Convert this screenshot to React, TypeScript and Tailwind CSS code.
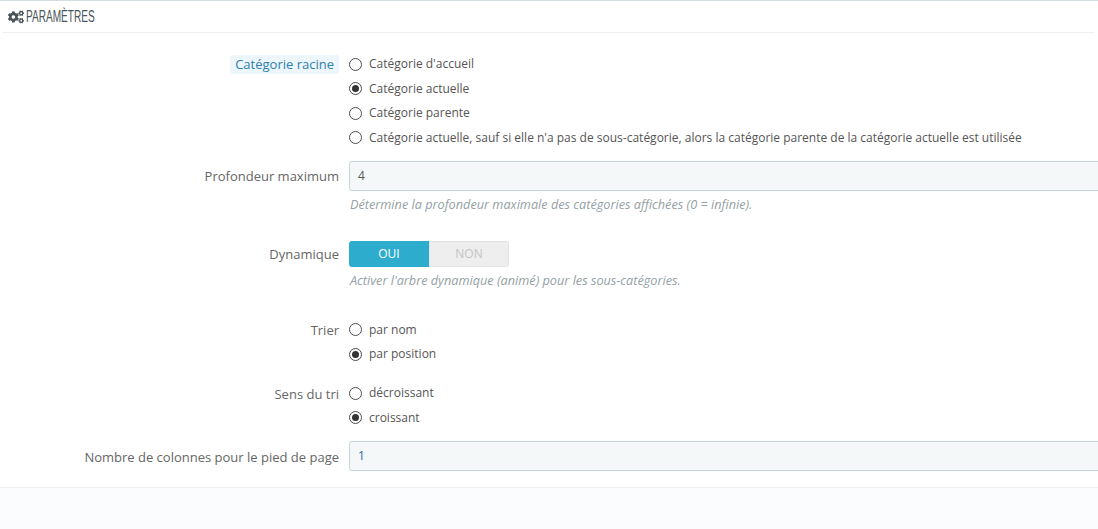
import { FaCogs } from "react-icons/fa";

const font = "font-['Open_Sans',sans-serif]";

const Radio = ({ label, checked }: { label: string; checked?: boolean }) => (
  <div className="flex h-[24.5px] items-center">
    <span className="flex h-[13px] w-[13px] shrink-0 items-center justify-center rounded-full border border-[#4d4d4d] bg-white">
      {checked && <span className="h-[7px] w-[7px] rounded-full bg-[#333333]" />}
    </span>
    <span className="ml-[7px] whitespace-nowrap text-[12px] text-[#555555]">{label}</span>
  </div>
);

const Label = ({ children }: { children: React.ReactNode }) => (
  <div className="w-[339px] shrink-0 text-right text-[13px] leading-[20px] text-[#666666]">
    {children}
  </div>
);

const TextBox = ({ value, blue }: { value: string; blue?: boolean }) => (
  <div
    className={`flex h-[30px] w-[800px] items-center rounded-[3px] border border-[#c7d6db] bg-[#f5f8f9] pl-[8px] text-[12px] ${
      blue ? "text-[#25699c]" : "text-[#555555]"
    }`}
  >
    {value}
  </div>
);

const Hint = ({ children }: { children: React.ReactNode }) => (
  <p className="mt-[4px] ml-[1px] whitespace-nowrap text-[12.7px] italic leading-[18px] text-[#959fa5]">{children}</p>
);

export default function App() {
  return (
    <div className={`${font} flex h-[529px] w-[1098px] flex-col overflow-hidden bg-white`}>
      <div className="h-[1px] shrink-0 bg-[#d5dcdf]" />
      {/* Heading */}
      <div className="mx-[3px] flex h-[32px] shrink-0 items-center gap-[2px] border-b border-[#eeeeee] pl-[5px]">
        <FaCogs size={16} color="#4a5256" className="shrink-0" />
        <span className="inline-block origin-left scale-x-[0.63] whitespace-nowrap font-['Liberation_Sans',sans-serif] text-[16px] text-[#4a555c]">
          PARAMÈTRES
        </span>
      </div>

      {/* Form */}
      <div className="flex h-[455px] shrink-0 flex-col border-b border-[#eeeeee]">
        <div className="mt-[22px] flex">
          <div className="flex w-[339px] shrink-0 justify-end">
            <span className="h-[19px] rounded-[3px] bg-[#edf6fb] px-[5px] text-[13px] leading-[19px] text-[#2f80ac]">
              Catégorie racine
            </span>
          </div>
          <div className="-mt-[3px] ml-[10px]">
            <Radio label="Catégorie d'accueil" />
            <Radio label="Catégorie actuelle" checked />
            <Radio label="Catégorie parente" />
            <Radio label="Catégorie actuelle, sauf si elle n'a pas de sous-catégorie, alors la catégorie parente de la catégorie actuelle est utilisée" />
          </div>
        </div>

        <div className="mt-[11px] flex">
          <Label><div className="mt-[5px]">Profondeur maximum</div></Label>
          <div className="ml-[10px]">
            <TextBox value="4" />
            <Hint>Détermine la profondeur maximale des catégories affichées (0 = infinie).</Hint>
          </div>
        </div>

        <div className="mt-[28px] flex">
          <Label><div className="mt-[3px]">Dynamique</div></Label>
          <div className="ml-[10px]">
            <div className="flex h-[26px] w-[160px] overflow-hidden rounded-[3px] text-[12px]">
              <span className="flex w-[80px] items-center justify-center bg-[#2eacce] text-white">OUI</span>
              <span className="flex w-[80px] items-center justify-center border border-[#e2e2e2] bg-[#eeeeee] text-[#c4c4c4]">NON</span>
            </div>
            <Hint>Activer l'arbre dynamique (animé) pour les sous-catégories.</Hint>
          </div>
        </div>

        <div className="mt-[28.6px] flex">
          <Label><div className="mt-[2px]">Trier</div></Label>
          <div className="ml-[10px]">
            <Radio label="par nom" />
            <Radio label="par position" checked />
          </div>
        </div>

        <div className="mt-[14.4px] flex">
          <Label><div className="mt-[3px]">Sens du tri</div></Label>
          <div className="ml-[10px]">
            <Radio label="décroissant" />
            <Radio label="croissant" checked />
          </div>
        </div>

        <div className="mt-[11px] flex">
          <Label><div className="mt-[6px]">Nombre de colonnes pour le pied de page</div></Label>
          <div className="ml-[10px]">
            <TextBox value="1" blue />
          </div>
        </div>
      </div>
      <div className="flex-1 bg-[#fbfcfe]" />
    </div>
  );
}
